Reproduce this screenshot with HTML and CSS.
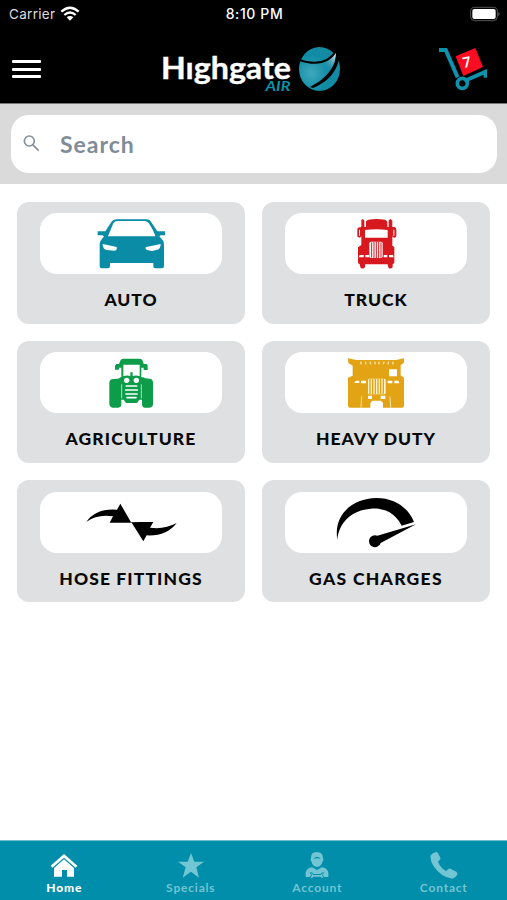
FILE: index.html
```html
<!DOCTYPE html>
<html lang="en">
<head>
<meta charset="utf-8">
<title>Highgate Air</title>
<link rel="stylesheet" href="styles.css">
</head>
<body>
<div class="app">
  <header class="header">
    <div class="status">
      <div class="carrier"><span>Carrier</span>
        <svg width="20" height="15" viewBox="0 0 60 45"><g fill="none" stroke="#fff" stroke-width="7"><path d="M4 17Q30-7 56 17"/><path d="M13 27Q30 12 47 27"/></g><path d="M20 34Q30 26 40 34L30 44Z" fill="#fff"/></svg>
      </div>
      <time class="clock">8:10 PM</time>
      <svg class="battery" width="30" height="16" viewBox="0 0 90 48"><rect x="2" y="4" width="80" height="40" rx="12" fill="none" stroke="#555" stroke-width="3"/><rect x="7" y="9" width="70" height="30" rx="6" fill="#fff"/><path d="M85 18Q93 24 85 31Z" fill="#666"/></svg>
    </div>
    <div class="bar">
      <button class="menu" aria-label="Menu"><i></i><i></i><i></i></button>
      <svg class="logo" width="182" height="54" viewBox="0 0 182 54">
        <defs>
          <radialGradient id="globe" cx=".3" cy=".6" r=".7"><stop offset="0" stop-color="#3fa9bc"/><stop offset=".6" stop-color="#108ba5"/><stop offset="1" stop-color="#168aa3"/></radialGradient>
          <linearGradient id="shine" x1="1" y1="0" x2=".4" y2="1"><stop offset="0" stop-color="#fff"/><stop offset=".8" stop-color="#1590aa" stop-opacity="0"/></linearGradient>
        </defs>
        <text class="word" x="-1" y="35.500" textLength="130" lengthAdjust="spacingAndGlyphs">Hıghgate</text>
        <text class="air" x="103.500" y="48" textLength="25" lengthAdjust="spacingAndGlyphs">AIR</text>
        <ellipse cx="157.500" cy="26" rx="20.500" ry="22" fill="url(#globe)"/>
        <path d="M157 21Q170 18 174 9Q176 24 164 35Z" fill="url(#shine)"/>
        <path d="M136 16.500Q163 26 174 8" fill="none" stroke="#000" stroke-width="2"/>
        <path d="M174 3L174 8Q175 30 148 44L151 45Q173 36 177 16L180 3Z" fill="#000"/>
      </svg>
      <svg class="cart" width="50" height="46" viewBox="0 0 150 138">
        <path d="M6 12H26L62 94M82 105L146 77V95" fill="none" stroke="#0e91ab" stroke-width="12"/>
        <circle cx="76" cy="112" r="15" fill="none" stroke="#0e91ab" stroke-width="11"/>
        <path d="M56 31L115 6L138 63L79 90Z" fill="#fa0d20"/>
        <text class="count" x="77" y="64" transform="rotate(-12 88 48)">7</text>
      </svg>
    </div>
  </header>
  <div class="search">
    <label class="field">
      <svg width="17" height="17" viewBox="0 0 51 51" fill="none" stroke="#84919a" stroke-width="5"><circle cx="19" cy="18" r="15"/><path d="M29 29L47 47"/></svg>
      <span>Search</span>
    </label>
  </div>
  <main class="grid">
    <a class="card"><div class="pill"><svg width="182" height="61"><g transform="translate(40 -8) scale(.33333)" fill="#0b8ca6">
      <path fill-rule="evenodd" d="M53 79H76L94 51Q98 44 110 43H199Q209 43 213 50L232 79H255V91H242L238 94L250 108Q252 112 252 123V184Q252 190 246 190H226Q220 190 220 184V174H90V184Q90 190 84 190H65Q59 190 59 184V117Q59 109 64 104L72 94L67 91H53ZM84 94H226Q222 78 206 54Q202 49 195 48H113Q104 48 100 55Z"/>
      <path fill="#fff" d="M68 117L110 126Q113 135 103 137L81 135Q68 133 68 117ZM242 117L199 126Q193 129 201 135L216 138L229 135Q242 133 242 117Z"/></g></svg></div><span class="auto">AUTO</span></a>
    <a class="card"><div class="pill"><svg width="182" height="61"><g transform="translate(45 -8) scale(.33333)" fill="#d7191f">
      <path d="M94 45L99 42L103 47V66H108V50Q109 46 115 44Q140 40 165 44Q171 46 172 52V66H176V46L182 42L187 47V66H193Q199 67 199 74V92Q198 99 191 98L187 94V122L193 126V174L188 178V187Q184 192 176 190L173 178H105V187Q100 193 92 189L89 178L84 174V127L94 120V94L90 98L82 95V72Q83 66 94 66Z"/>
      <path fill="#fff" d="M105 75Q139 70 173 75V98H105ZM89 150H101V157H86ZM106 150H117V157H106ZM161 150H172V157H161ZM177 150H189L191 157H177Z"/><rect x="118" y="110" width="40" height="49" rx="5" fill="#fff"/><path d="M125 112V158M132 110V160M139 110V160M146 110V160M153 112V158" stroke="#d7191f" stroke-width="3"/><path fill="#fff" d="M190 74H193V92H190ZM87 74H90V92H87Z"/></g></svg></div><span class="truck">TRUCK</span></a>
    <a class="card"><div class="pill"><svg width="182" height="61"><g transform="translate(40 -7) scale(.33333)" fill="#0d9c49">
      <path d="M122 45Q124 41 132 41H178Q187 41 188 47L191 57H200L203 61V75H191V68H184V97H190Q193 101 209 101Q219 102 219 113V178Q218 188 209 188H193Q187 187 186 179V164H178L171 174H138L131 164H124V178Q123 188 115 188H98Q89 187 88 178V113Q89 102 99 102Q119 103 121 97H124V68H117V74H105V62L109 57H117Z"/>
      <path fill="#fff" d="M130 59H179V94Q169 90 158 93V82H151V93Q141 90 130 94Z"/><circle cx="140" cy="106" r="8" fill="#fff"/><circle cx="169" cy="106" r="8" fill="#fff"/><path d="M139 123H170M137 135H172M138 147H171M141 158H168" stroke="#fff" stroke-width="5" stroke-linecap="round"/><path d="M125 118V160M184 118V160" stroke="#fff" stroke-width="2"/></g></svg></div><span class="agri">AGRICULTURE</span></a>
    <a class="card"><div class="pill"><svg width="182" height="61"><g transform="translate(45 -7) scale(.33333)" fill="#e2a414">
      <path d="M54 40L79 45H198L222 40V53L212 60V91L222 98V182Q221 188 216 188H159V174L153 167H127L121 174V188H60Q55 188 54 182V98L68 92V62L55 54Z"/>
      <path fill="#fff" d="M177 73H201V94H177ZM78 107H88V114H72ZM93 107H108V115H93ZM173 107H187V115H173ZM193 107H205L208 115H193ZM114 152H126V162H114ZM152 152H166V162H152Z"/><rect x="114" y="101" width="53" height="47" rx="4" fill="#fff3d0"/><path d="M120 102V147M128 102V147M136 102V147M144 102V147M152 102V147M160 102V147" stroke="#e2a414" stroke-width="4"/><path d="M92 50L94 58M106 50L108 58M120 50L122 58M134 50L136 58M148 50L146 58M162 50L160 58M176 50L174 58M190 50L188 58" stroke="#f8e3ae" stroke-width="4"/><path d="M95 154L93 188M180 154L182 188" stroke="#fff" stroke-width="2"/></g></svg></div><span class="heavy">HEAVY DUTY</span></a>
    <a class="card"><div class="pill"><svg width="182" height="61"><g transform="translate(-30 -17) scale(.33333)">
      <path d="M229 141Q257 99 321 104L331 86L363 142L391 141H430L420 158Q463 164 500 144Q470 184 410 181L400 199L365 143H299L309 124Q261 117 229 141Z"/></g></svg></div><span class="hose">HOSE FITTINGS</span></a>
    <a class="card"><div class="pill"><svg width="182" height="61"><g transform="translate(-30 -17) scale(.33333)">
      <path d="M247 195C235 121 290 70 364 69C421 69 461 100 477 141L440 152C420 112 386 99 348 101C291 105 251 142 247 195Z"/><path d="M483 148L377 204A18 18 0 1 1 367 182Z"/></g></svg></div><span class="gas">GAS CHARGES</span></a>
  </main>
  <nav class="tabs">
    <a class="tab active"><svg width="28" height="28" viewBox="0 0 84 84" fill="#fff"><path d="M42 9L82 44L77 50L42 20L7 50L2 44Z"/><path d="M42 25L72 51V77H51V57H36V77H12V51Z"/></svg><span class="home">Home</span></a>
    <a class="tab"><svg width="28" height="28" viewBox="0 0 84 84" fill="#72c5d3"><path d="M42 6L52 32H81L58 49L66 80L42 62L17 80L26 49L3 32H32Z"/></svg><span class="specials">Specials</span></a>
    <a class="tab"><svg width="28" height="28" viewBox="0 0 84 84" fill="#72c5d3"><g transform="translate(0 -3)"><path fill-rule="evenodd" d="M24 25Q23 6 41 6Q60 6 60 25Q64 29 59 34Q55 50 42 51Q28 50 25 34Q20 29 24 25ZM31 27Q34 21 42 20Q50 21 53 27Q42 23 31 27Z"/><path d="M28 52L42 60L56 52Q74 54 76 69V81H64L59 75L64 68Q57 65 53 72H32Q27 65 20 68L25 75L20 81H8V69Q10 54 28 52Z"/><path d="M23 69Q29 70 31 75H54Q56 70 62 69L57 76L62 83Q56 85 53 80H31Q29 85 22 83L27 76Z"/></g></svg><span class="account">Account</span></a>
    <a class="tab"><svg width="28" height="28" viewBox="0 0 84 84" fill="#72c5d3"><path d="M2 13Q8 5 18 3Q22 3 24 7L31 20Q33 24 28 28L24 32Q31 50 48 60L55 54Q59 51 63 54L79 62Q84 66 81 72Q76 81 67 83Q33 78 12 47Q-1 27 2 13Z"/></svg><span class="contact">Contact</span></a>
  </nav>
</div>
</body>
</html>
```

FILE: styles.css
```css
* { box-sizing: border-box; }
body { margin: 0; font-family: Lato, sans-serif; background: #fff; }
svg { display: block; flex: none; }
.app { width: 507px; height: 900px; display: flex; flex-direction: column; }

.header { height: 104px; background: #000; color: #fff; flex: none; border-bottom: 1px solid #777; }
.status { height: 27px; display: grid; grid-template-columns: 1fr auto 1fr; align-items: center; padding: 0 7px 0 9px; font-family: Inter, sans-serif; font-size: 13.5px; }
.carrier { display: flex; align-items: center; gap: 5px; color: #ddd; letter-spacing: .3px; }
.clock { font-weight: 500; letter-spacing: .6px; font-size: 14px; }
.battery { justify-self: end; }
.bar { display: grid; grid-template-columns: 149px 182px 1fr; height: 76px; padding: 0 20px 0 12px; align-items: start; }
.menu { appearance: none; border: 0; background: none; padding: 33px 0 0; width: 29px; display: flex; flex-direction: column; gap: 4.700px; }
.menu i { display: block; height: 3px; width: 29px; background: #fff; border-radius: 1px; }
.logo { margin: 16px 0 0 1px; }
.word { font: 700 31px Lato, sans-serif; fill: #fff; stroke: #fff; stroke-width: .4px; }
.air { font: italic 700 12.500px Lato, sans-serif; fill: #0e91ab; }
.cart { justify-self: end; margin-top: 19px; }
.count { font: 700 43px Lato, sans-serif; fill: #fff; }

.search { height: 80px; background: #dadada; padding: 10.500px 10px 0 11px; flex: none; }
.field { height: 58.500px; border-radius: 18px; background: #fff; display: flex; align-items: center; gap: 20px; padding: 0 12px; color: #7f8c97; font-size: 23px; font-weight: 700; letter-spacing: 1px; }

.grid { flex: 1; display: grid; grid-template-columns: 228px 228px; grid-template-rows: repeat(3, 122px); gap: 17.300px 17px; padding: 17.500px 17px 0; }
.card { background: #dfe0e1; border-radius: 12px; padding: 11.500px 23px 0; display: flex; flex-direction: column; align-items: center; gap: 13px; font-size: 17.500px; font-weight: 900; line-height: 25px; color: #080808; white-space: nowrap; }
.pill { width: 182px; height: 61px; border-radius: 17px; background: #fff; overflow: hidden; flex: none; }
.auto { letter-spacing: .9px; }
.truck { letter-spacing: 1px; }
.agri { letter-spacing: 1.15px; }
.heavy { letter-spacing: .95px; }
.hose { letter-spacing: 1.1px; }
.gas { letter-spacing: 1.300px; }

.tabs { height: 60px; flex: none; background: #018eaa; border-top: 1px solid #6cbdcd; display: grid; grid-template-columns: repeat(4, 1fr); padding: 10px 0 0 1px; }
.tab { display: flex; flex-direction: column; align-items: center; color: #72c5d3; font-size: 12px; font-weight: 700; line-height: 16px; gap: 1px; letter-spacing: .8px; }
.tab.active { color: #fff; font-weight: 900; }
```
